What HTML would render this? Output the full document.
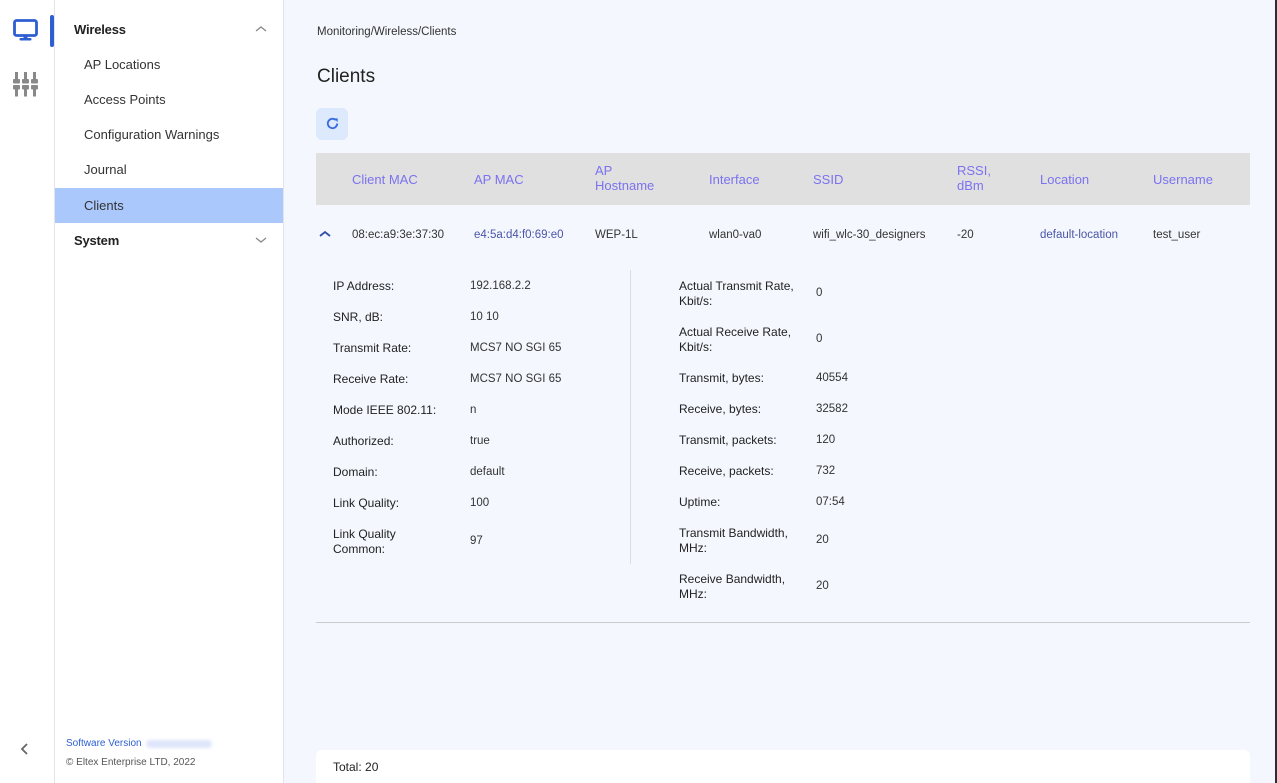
<!DOCTYPE html>
<html><head><meta charset="utf-8"><style>
*{box-sizing:border-box;margin:0;padding:0}
html,body{width:1277px;height:783px;overflow:hidden}
body{background:#f4f7fd;font-family:"Liberation Sans",sans-serif;color:#222;position:relative;font-size:12px}
.a{position:absolute;white-space:nowrap}
#rail{left:0;top:0;width:55px;height:783px;background:#fff;border-right:1px solid #e2e4ea}
#nav{left:55px;top:0;width:229px;height:783px;background:#fff;border-right:1px solid #e2e4ea}
.nv{font-size:13px;color:#333}
.hd{font-size:13px;color:#222;font-weight:bold;letter-spacing:-0.2px}
.th{color:#7b72f0;font-size:13px;line-height:15px}
.lb{font-size:12px;color:#222;line-height:15px}
.vl{font-size:11.5px;color:#333;line-height:15px}
.lk{color:#4a55a8}
</style></head><body>
<div id="rail" class="a"></div>
<svg class="a" style="left:13px;top:19px" width="25" height="23" viewBox="0 0 25 23"><rect x="1.5" y="1.5" width="22" height="15" rx="2" fill="none" stroke="#2d5fd3" stroke-width="2.8"/><rect x="10.5" y="16" width="4" height="4" fill="#2d5fd3"/><rect x="6.5" y="19" width="12" height="2.5" rx="1" fill="#2d5fd3"/></svg>
<div class="a" style="left:50px;top:15px;width:4px;height:32px;background:#2d5fd3;border-radius:2px"></div>
<svg class="a" style="left:13px;top:72px" width="25" height="25" viewBox="0 0 25 25" fill="#888"><g id="c"><rect x="2" y="0" width="3" height="7"/><rect x="0" y="7" width="7" height="4.5" rx="1"/><rect x="0" y="13" width="7" height="4.5" rx="1"/><rect x="2" y="17.5" width="3" height="7"/></g><use href="#c" x="9"/><use href="#c" x="18"/></svg>
<svg class="a" style="left:19px;top:742px" width="12" height="14" viewBox="0 0 12 14"><path d="M8 2L3 7l5 5" fill="none" stroke="#666" stroke-width="1.8"/></svg>
<div id="nav" class="a"></div>
<div class="a hd" style="left:74px;top:22px">Wireless</div>
<svg class="a" style="left:255px;top:25px" width="12" height="8"><path d="M1 6l5-4 5 4" fill="none" stroke="#888" stroke-width="1.3"/></svg>
<div class="a nv" style="left:84px;top:57px">AP Locations</div>
<div class="a nv" style="left:84px;top:92px">Access Points</div>
<div class="a nv" style="left:84px;top:127px">Configuration Warnings</div>
<div class="a nv" style="left:84px;top:162px">Journal</div>
<div class="a" style="left:55px;top:188px;width:228px;height:35px;background:#aac8fc"></div>
<div class="a nv" style="left:84px;top:198px">Clients</div>
<div class="a hd" style="left:74px;top:233px">System</div>
<svg class="a" style="left:255px;top:236px" width="12" height="8"><path d="M1 2l5 4 5-4" fill="none" stroke="#888" stroke-width="1.3"/></svg>
<div class="a" style="left:66px;top:738px;font-size:10px;color:#2d5fd3">Software Version</div>
<div class="a" style="left:146px;top:740px;width:66px;height:8px;background:#dfe6fb;border-radius:4px;filter:blur(1.5px)"></div>
<div class="a" style="left:66px;top:757px;font-size:10px;color:#555">© Eltex Enterprise LTD, 2022</div>

<div class="a" style="left:317px;top:26px;font-size:11.5px;color:#333">Monitoring/Wireless/Clients</div>
<div class="a" style="left:317px;top:66px;font-size:19px;color:#222">Clients</div>
<div class="a" style="left:316px;top:108px;width:32px;height:32px;background:#dde9fd;border-radius:6px"></div>
<svg class="a" style="left:325px;top:116px" width="15" height="15" viewBox="0 0 16 16"><path d="M13 8a5 5 0 1 1-1.5-3.6" fill="none" stroke="#3a6ee0" stroke-width="2"/><path d="M9.5 2.5h4v4z" fill="#3a6ee0"/></svg>
<div class="a" style="left:316px;top:153px;width:934px;height:52px;background:#e0e0e0"></div>
<div class="a th" style="left:352px;top:172px">Client MAC</div>
<div class="a th" style="left:474px;top:172px">AP MAC</div>
<div class="a th" style="left:595px;top:163px">AP<br>Hostname</div>
<div class="a th" style="left:709px;top:172px">Interface</div>
<div class="a th" style="left:813px;top:172px">SSID</div>
<div class="a th" style="left:957px;top:163px">RSSI,<br>dBm</div>
<div class="a th" style="left:1040px;top:172px">Location</div>
<div class="a th" style="left:1153px;top:172px">Username</div>
<svg class="a" style="left:319px;top:230px" width="12" height="8"><path d="M1 6l5-4 5 4" fill="none" stroke="#2d4fa8" stroke-width="1.8"/></svg>
<div class="a vl" style="left:352px;top:228px">08:ec:a9:3e:37:30</div>
<div class="a vl lk" style="left:474px;top:228px">e4:5a:d4:f0:69:e0</div>
<div class="a vl" style="left:595px;top:228px">WEP-1L</div>
<div class="a vl" style="left:709px;top:228px">wlan0-va0</div>
<div class="a vl" style="left:813px;top:228px">wifi_wlc-30_designers</div>
<div class="a vl" style="left:957px;top:228px">-20</div>
<div class="a vl lk" style="left:1040px;top:228px">default-location</div>
<div class="a vl" style="left:1153px;top:228px">test_user</div>
<div class="a" style="left:630px;top:270px;width:1px;height:294px;background:#ddd"></div>

<div class="a lb" style="left:333px;top:279px">IP Address:</div><div class="a vl" style="left:470px;top:279px">192.168.2.2</div>
<div class="a lb" style="left:333px;top:310px">SNR, dB:</div><div class="a vl" style="left:470px;top:310px">10 10</div>
<div class="a lb" style="left:333px;top:341px">Transmit Rate:</div><div class="a vl" style="left:470px;top:341px">MCS7 NO SGI 65</div>
<div class="a lb" style="left:333px;top:372px">Receive Rate:</div><div class="a vl" style="left:470px;top:372px">MCS7 NO SGI 65</div>
<div class="a lb" style="left:333px;top:403px">Mode IEEE 802.11:</div><div class="a vl" style="left:470px;top:403px">n</div>
<div class="a lb" style="left:333px;top:434px">Authorized:</div><div class="a vl" style="left:470px;top:434px">true</div>
<div class="a lb" style="left:333px;top:465px">Domain:</div><div class="a vl" style="left:470px;top:465px">default</div>
<div class="a lb" style="left:333px;top:496px">Link Quality:</div><div class="a vl" style="left:470px;top:496px">100</div>
<div class="a lb" style="left:333px;top:527px">Link Quality<br>Common:</div><div class="a vl" style="left:470px;top:534px">97</div>

<div class="a lb" style="left:679px;top:279px">Actual Transmit Rate,<br>Kbit/s:</div><div class="a vl" style="left:816px;top:286px">0</div>
<div class="a lb" style="left:679px;top:325px">Actual Receive Rate,<br>Kbit/s:</div><div class="a vl" style="left:816px;top:332px">0</div>
<div class="a lb" style="left:679px;top:371px">Transmit, bytes:</div><div class="a vl" style="left:816px;top:371px">40554</div>
<div class="a lb" style="left:679px;top:402px">Receive, bytes:</div><div class="a vl" style="left:816px;top:402px">32582</div>
<div class="a lb" style="left:679px;top:433px">Transmit, packets:</div><div class="a vl" style="left:816px;top:433px">120</div>
<div class="a lb" style="left:679px;top:464px">Receive, packets:</div><div class="a vl" style="left:816px;top:464px">732</div>
<div class="a lb" style="left:679px;top:495px">Uptime:</div><div class="a vl" style="left:816px;top:495px">07:54</div>
<div class="a lb" style="left:679px;top:526px">Transmit Bandwidth,<br>MHz:</div><div class="a vl" style="left:816px;top:533px">20</div>
<div class="a lb" style="left:679px;top:572px">Receive Bandwidth,<br>MHz:</div><div class="a vl" style="left:816px;top:579px">20</div>
<div class="a" style="left:316px;top:622px;width:934px;height:1px;background:#ccc"></div>

<div class="a" style="left:316px;top:750px;width:934px;height:40px;background:#fff;border-radius:6px"></div>
<div class="a" style="left:333px;top:760px;font-size:12px;color:#222">Total: 20</div>
<div class="a" style="left:1275px;top:0;width:2px;height:783px;background:#2a2f33"></div>
</body></html>
